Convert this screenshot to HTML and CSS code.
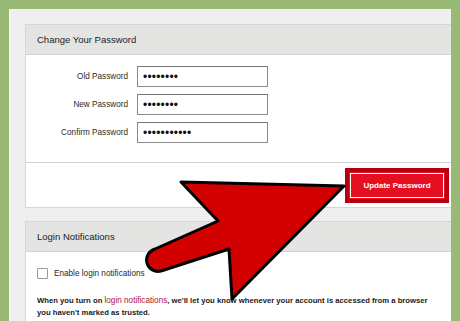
FILE: index.html
```html
<!DOCTYPE html>
<html lang="en">
<head>
  <meta charset="UTF-8">
  <title>Security Settings</title>
  <link rel="stylesheet" href="styles.css">
</head>
<body>
  <div class="page">
    <div class="panel">
      <section class="card">
        <div class="card-head">Change Your Password</div>
        <div class="card-body form">
          <div class="row">
            <label>Old Password</label>
            <input type="password" value="aaaaaaaa">
          </div>
          <div class="row">
            <label>New Password</label>
            <input type="password" value="aaaaaaaa">
          </div>
          <div class="row">
            <label>Confirm Password</label>
            <input type="password" value="aaaaaaaaaaa">
          </div>
        </div>
        <div class="card-foot">
          <div class="focus-ring">
            <button class="btn-red">Update Password</button>
          </div>
        </div>
      </section>

      <section class="card">
        <div class="card-head">Login Notifications</div>
        <div class="card-body notif">
          <label class="check"><span class="box"></span>Enable login notifications</label>
          <p>When you turn on <a href="#">login notifications</a>, we'll let you know whenever your account is accessed from a browser you haven't marked as trusted.</p>
        </div>
      </section>
    </div>

    <!-- стрелка поверх -->
    <svg class="arrow" width="460" height="321" viewBox="0 0 460 321">
      <path d="M181 182 L344 186 L232 299 L229 249 L161 271 A11.4 11.4 0 0 1 155 249 L218 221 Z"
            fill="#d30000" stroke="#000" stroke-width="3" stroke-linejoin="round"/>
    </svg>
  </div>
</body>
</html>
```

FILE: styles.css
```css
html, body {
  margin: 0;
  background: #99ba77;
  font-family: 'Liberation Sans', Arial, sans-serif;
  color: #222;
}
.page {
  position: relative;
  width: 460px;
  height: 321px;
  overflow: hidden;
}
.panel {
  margin: 9px 9px 0 9px;
  height: 312px;
  background: #efeff1;
  border-left: 1px solid #f8f8f8;
  padding: 15px 0 0 15px;
  box-sizing: border-box;
}
.card {
  background: #fff;
  border: 1px solid #d6d6d6;
  border-right: none;
  margin-bottom: 13px;
}
.card-head {
  height: 29px;
  display: flex;
  align-items: center;
  padding-left: 11px;
  background: #e4e5e3;
  border-bottom: 1px solid #d3d3d3;
  font-size: 9.5px;
  color: #1c1c1c;
}

/* форма */
.form {
  padding: 11px 0 19px;
  display: flex;
  flex-direction: column;
  gap: 7px;
  border-bottom: 1px solid #d0d0d0;
}
.row {
  display: flex;
  align-items: center;
}
.row label {
  width: 102px;
  margin-right: 9px;
  text-align: right;
  font-size: 8.2px;
  color: #2a2a2a;
}
.row input {
  width: 131px;
  height: 21px;
  box-sizing: border-box;
  border: 1px solid #8c8c8c;
  border-top-color: #777;
  padding: 0 5px;
  font-family: 'Liberation Sans', Arial, sans-serif;
  font-size: 12px;
  letter-spacing: 0.2px;
  color: #111;
  background: #fff;
  outline: none;
}
.card-foot {
  height: 44px;
  display: flex;
  align-items: center;
  justify-content: flex-end;
  padding-right: 2px;
}
.focus-ring {
  background: #b6000f;
  padding: 5px 5px;
}
.btn-red {
  display: block;
  width: 94px;
  height: 25px;
  border: 1px solid #fff;
  outline: 1px solid #e8122a;
  background: #e5101f;
  color: #fff;
  font-family: 'Liberation Sans', Arial, sans-serif;
  font-weight: 700;
  font-size: 8px;
  padding: 0;
}

/* уведомления */
.notif {
  padding: 16px 0 40px 11px;
}
.check {
  display: flex;
  align-items: center;
  font-size: 8.2px;
  color: #2a2a2a;
}
.check .box {
  width: 9px;
  height: 9px;
  border: 1px solid #9a9a9a;
  border-radius: 1px;
  margin-right: 6px;
  background: #fff;
}
.notif p {
  margin: 16px 0 0;
  width: 400px;
  font-size: 7.7px;
  font-weight: 700;
  line-height: 12px;
  color: #1a1a1a;
}
.notif p a {
  color: #b01230;
  font-weight: 400;
  font-size: 8.2px;
  line-height: 11px;
  text-decoration: none;
}
.arrow {
  position: absolute;
  top: 0;
  left: 0;
}
```
